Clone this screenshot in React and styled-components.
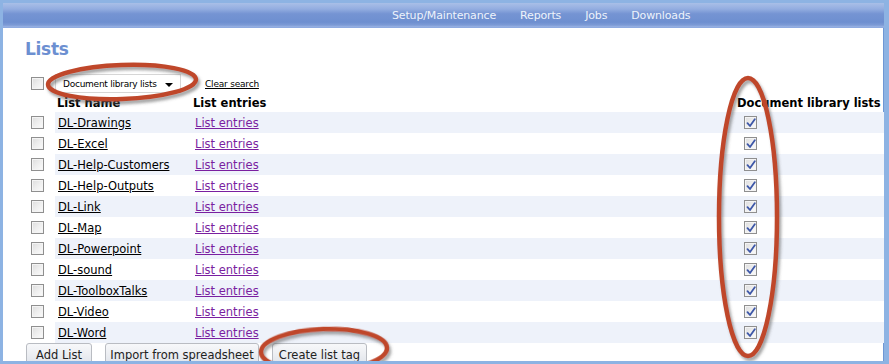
import React from "react";
import styled, { createGlobalStyle } from "styled-components";

const Global = createGlobalStyle`
  html, body { margin: 0; padding: 0; background: #8db3e3; }
  body { font-family: "DejaVu Sans", Verdana, sans-serif; }
`;

const Frame = styled.div`
  position: relative;
  width: 889px;
  height: 364px;
  box-sizing: border-box;
  border-style: solid;
  border-color: #8db3e3;
  border-width: 3px 5px 3px 3px;
  box-shadow: inset -1px 0 0 #6f97d4;
  background: #fff;
  overflow: hidden;
`;

const NavBar = styled.nav`
  height: 24px;
  display: flex;
  align-items: center;
  gap: 24px;
  padding-left: 389px;
  background: linear-gradient(#a9bfe7 0%, #93ade0 25%, #7594d3 45%, #6e8fd0 80%, #7d9bd6 92%, #9bb4e4 100%);
  border-bottom: 1px solid #8eaae0;
`;

const NavItem = styled.a`
  color: #eef3fb;
  font-size: 11px;
  text-decoration: none;
  letter-spacing: -0.15px;
`;

const Content = styled.div`
  padding: 10px 0 0 22px;
`;

const Title = styled.h1`
  margin: 0;
  height: 22px;
  line-height: 22px;
  font-size: 17px;
  font-weight: bold;
  color: #6c8fd1;
  letter-spacing: -0.3px;
`;

const Toolbar = styled.div`
  margin-top: 14px;
  height: 19px;
  display: flex;
  align-items: center;
`;

const CheckCell = styled.div`
  width: 30px;
  flex: none;
  display: flex;
  align-items: center;
`;

const Box = styled.span`
  box-sizing: border-box;
  display: inline-flex;
  align-items: center;
  justify-content: center;
  width: 13px;
  height: 13px;
  margin-left: ${(p) => p.$ml ?? 6}px;
  border: 1px solid #8f8f8f;
  background: linear-gradient(135deg, #dcdcdc 0%, #eeeeee 50%, #fbfbfb 100%);
  box-shadow: inset 0 0 0 1px #f4f4f4;
`;

const Select = styled.div`
  flex: none;
  box-sizing: border-box;
  width: 126px;
  height: 19px;
  border: 1px solid #d6d6d6;
  background: #fff;
  display: flex;
  align-items: center;
  justify-content: space-between;
  padding: 0 7px 0 7px;
  font-size: 9px;
  letter-spacing: -0.25px;
  white-space: nowrap;
  color: #000;
`;

const Arrow = styled.span`
  flex: none;
  width: 0;
  height: 0;
  border-left: 4px solid transparent;
  border-right: 4px solid transparent;
  border-top: 4px solid #000;
  margin-top: 3px;
`;

const SmallLink = styled.a`
  flex: none;
  margin-left: 24px;
  font-size: 9px;
  letter-spacing: -0.2px;
  color: #000;
  text-decoration: underline;
`;

const HeaderRow = styled.div`
  display: flex;
  height: 19px;
  align-items: center;
  font-weight: bold;
  font-size: 11.5px;
  color: #000;
`;

const Col = styled.div`
  flex: none;
  width: ${(p) => p.$w}px;
  padding-left: ${(p) => p.$pl ?? 0}px;
  box-sizing: border-box;
  white-space: nowrap;
  display: flex;
  align-items: center;
`;

const Row = styled.div`
  display: flex;
  height: 21px;
`;

const RowBody = styled.div`
  flex: 1;
  display: flex;
  align-items: center;
  background: ${(p) => (p.$striped ? "#eef2fa" : "#fff")};
  font-size: 11.5px;
`;

const NameLink = styled.a`
  color: #000;
  text-decoration: underline;
`;

const EntryLink = styled.a`
  color: #7a1fa0;
  text-decoration: underline;
`;

const Buttons = styled.div`
  display: flex;
  gap: 13px;
  margin-left: 1px;
`;

const Button = styled.button`
  box-sizing: border-box;
  height: 23px;
  width: ${(p) => p.$w}px;
  padding: 0;
  border: 1px solid #b9bcc2;
  border-radius: 3px;
  background: linear-gradient(#f7f8fa 0%, #eceef2 50%, #dfe3ea 100%);
  font-family: "DejaVu Sans", Verdana, sans-serif;
  font-size: 11.5px;
  color: #222;
`;

const Overlay = styled.svg`
  position: absolute;
  left: -3px;
  top: -3px;
  pointer-events: none;
`;

const Check = () => (
  <svg width="10" height="10" viewBox="0 0 10 10">
    <path d="M1.5 5.2 L4 8 L8.8 1.2" fill="none" stroke="#3d57a8" strokeWidth="1.8" strokeLinecap="round" strokeLinejoin="round" />
  </svg>
);

const rows = [
  "DL-Drawings",
  "DL-Excel",
  "DL-Help-Customers",
  "DL-Help-Outputs",
  "DL-Link",
  "DL-Map",
  "DL-Powerpoint",
  "DL-sound",
  "DL-ToolboxTalks",
  "DL-Video",
  "DL-Word",
];

export default function App() {
  return (
    <>
      <Global />
      <Frame>
        <NavBar>
          <NavItem>Setup/Maintenance</NavItem>
          <NavItem>Reports</NavItem>
          <NavItem>Jobs</NavItem>
          <NavItem>Downloads</NavItem>
        </NavBar>
        <Content>
          <Title>Lists</Title>
          <Toolbar>
            <CheckCell>
              <Box />
            </CheckCell>
            <Select>
              <span>Document library lists</span>
              <Arrow />
            </Select>
            <SmallLink>Clear search</SmallLink>
          </Toolbar>
          <HeaderRow>
            <CheckCell />
            <Col $w={138} $pl={2}>List name</Col>
            <Col $w={544}>List entries</Col>
            <Col $w={150}>Document library lists</Col>
          </HeaderRow>
          {rows.map((name, i) => (
            <Row key={name}>
              <CheckCell>
                <Box />
              </CheckCell>
              <RowBody $striped={i % 2 === 0}>
                <Col $w={138} $pl={3}>
                  <NameLink>{name}</NameLink>
                </Col>
                <Col $w={544} $pl={2}>
                  <EntryLink>List entries</EntryLink>
                </Col>
                <Col $w={60}>
                  <Box $ml={7}>
                    <Check />
                  </Box>
                </Col>
              </RowBody>
            </Row>
          ))}
          <Buttons>
            <Button $w={66}>Add List</Button>
            <Button $w={154}>Import from spreadsheet</Button>
            <Button $w={95}>Create list tag</Button>
          </Buttons>
        </Content>
        <Overlay width="889" height="364" viewBox="0 0 889 364">
          <defs>
            <filter id="sh" x="-20%" y="-20%" width="140%" height="140%">
              <feDropShadow dx="2" dy="3" stdDeviation="1.6" floodColor="#555" floodOpacity="0.55" />
            </filter>
          </defs>
          <g fill="none" stroke="#bf472c" strokeWidth="4.5" filter="url(#sh)">
            <ellipse cx="122" cy="82" rx="74" ry="17" transform="rotate(-2 122 82)" />
            <ellipse cx="748" cy="217" rx="29" ry="139" />
            <ellipse cx="324" cy="350" rx="63" ry="21" transform="rotate(-2 324 350)" />
          </g>
        </Overlay>
      </Frame>
    </>
  );
}
